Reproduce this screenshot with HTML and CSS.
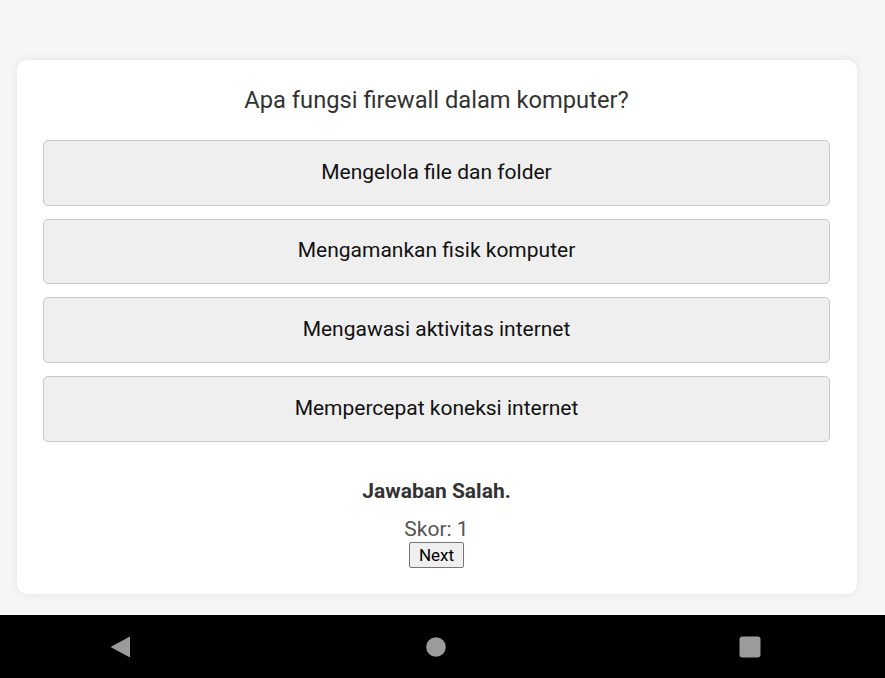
FILE: index.html
```html
<!DOCTYPE html>
<html lang="id">
<head>
    <meta charset="UTF-8" />
    <meta name="viewport" content="width=device-width, initial-scale=1">
    <title>Kuis Komputer</title>
    <link rel="stylesheet" href="styles.css">
</head>
<body>
<div class="page">
    <div class="quiz">
        <h2 class="question">Apa fungsi firewall dalam komputer?</h2>
        <div class="options">
            <button class="option">Mengelola file dan folder</button>
            <button class="option">Mengamankan fisik komputer</button>
            <button class="option">Mengawasi aktivitas internet</button>
            <button class="option">Mempercepat koneksi internet</button>
        </div>
        <div class="result">Jawaban Salah.</div>
        <div class="score">Skor: 1</div>
        <button class="next">Next</button>
    </div>
</div>

<div class="navbar">
    <svg class="nav-back" width="20" height="22" viewBox="0 0 20 22"><path d="M20 0.5 V21.5 L0.5 11 Z" fill="#9b9b9b"/></svg>
    <svg class="nav-home" width="20" height="20" viewBox="0 0 20 20"><circle cx="10" cy="10" r="9.8" fill="#9b9b9b"/></svg>
    <svg class="nav-recent" width="22" height="22" viewBox="0 0 22 22"><rect x="0.5" y="0.5" width="21" height="21" rx="3" fill="#9b9b9b"/></svg>
</div>
</body>
</html>
```

FILE: styles.css
```css
html, body {
    height: 100%;
}
body {
    margin: 0;
    font-family: Roboto, "Noto Sans", Arial, sans-serif;
    background: #f6f6f6;
    display: flex;
    flex-direction: column;
}
.page {
    flex: 1;
    padding: 60px 28px 0 17px;
}
.quiz {
    max-width: 840px;
    box-sizing: border-box;
    background: #fff;
    border-radius: 10px;
    box-shadow: 0 0 10px rgba(0, 0, 0, 0.08);
    padding: 25px 27px 26px 26px;
    text-align: center;
}
.question {
    margin: 0 0 25px;
    font-size: 23.7px;
    line-height: 30px;
    font-weight: 400;
    color: #333;
}
.options {
    display: flex;
    flex-direction: column;
    gap: 13.2px;
}
.option {
    height: 65.5px;
    padding: 0 0 2px;
    font-family: inherit;
    font-size: 21px;
    color: #111;
    background: #efefef;
    border: 1px solid #c8c8c8;
    border-radius: 5px;
    cursor: pointer;
}
.result {
    margin-top: 37px;
    font-size: 21px;
    line-height: 24px;
    font-weight: 700;
    color: #333;
}
.score {
    margin-top: 14px;
    font-size: 21px;
    line-height: 24px;
    color: #555;
}
.next {
    margin-top: 1px;
    height: 26px;
    padding: 0 9px;
    font-family: inherit;
    font-size: 17px;
    color: #000;
    background: #efefef;
    border: 1px solid #767676;
    border-radius: 2px;
}
.navbar {
    height: 63px;
    background: #000;
    display: flex;
    align-items: center;
    padding-left: 110px;
}
.nav-home {
    margin-left: 296px;
}
.nav-recent {
    margin-left: 293px;
}
```
